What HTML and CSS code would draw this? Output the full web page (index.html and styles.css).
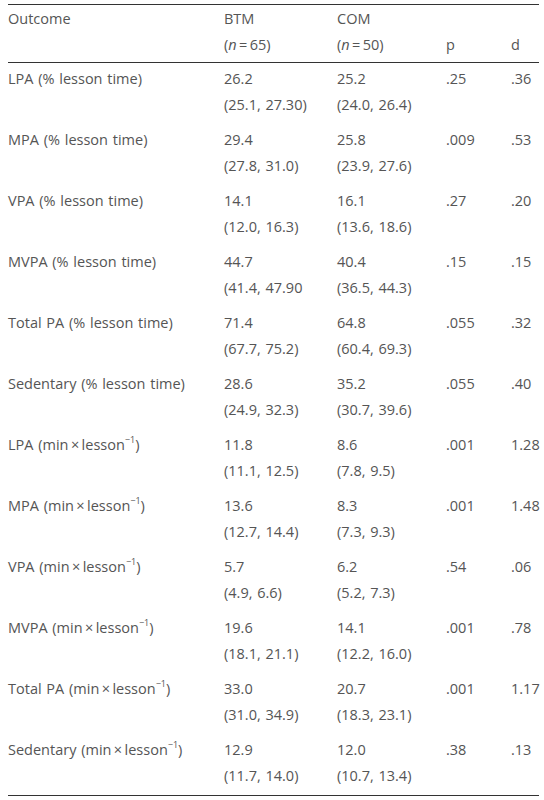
FILE: index.html
```html
<!DOCTYPE html>
<html lang="en">
<head>
    <meta charset="UTF-8">
    <meta name="viewport" content="width=device-width, initial-scale=1.0">
    <title>Physical activity outcomes by model</title>
    <link rel="stylesheet" href="styles.css">
</head>
<body>
    <table class="results">
        <colgroup>
            <col class="col-outcome">
            <col class="col-group">
            <col class="col-group2">
            <col class="col-p">
            <col class="col-d">
        </colgroup>
        <thead>
            <tr>
                <th class="top">Outcome</th>
                <th><span class="line">BTM</span><span class="line">(<i>n</i>&thinsp;=&thinsp;65)</span></th>
                <th><span class="line">COM</span><span class="line">(<i>n</i>&thinsp;=&thinsp;50)</span></th>
                <th>p</th>
                <th>d</th>
            </tr>
        </thead>
        <tbody>
            <tr>
                <td>LPA (% lesson time)</td>
                <td><span class="line">26.2</span><span class="line">(25.1, 27.30)</span></td>
                <td><span class="line">25.2</span><span class="line">(24.0, 26.4)</span></td>
                <td>.25</td>
                <td>.36</td>
            </tr>
            <tr>
                <td>MPA (% lesson time)</td>
                <td><span class="line">29.4</span><span class="line">(27.8, 31.0)</span></td>
                <td><span class="line">25.8</span><span class="line">(23.9, 27.6)</span></td>
                <td>.009</td>
                <td>.53</td>
            </tr>
            <tr>
                <td>VPA (% lesson time)</td>
                <td><span class="line">14.1</span><span class="line">(12.0, 16.3)</span></td>
                <td><span class="line">16.1</span><span class="line">(13.6, 18.6)</span></td>
                <td>.27</td>
                <td>.20</td>
            </tr>
            <tr>
                <td>MVPA (% lesson time)</td>
                <td><span class="line">44.7</span><span class="line">(41.4, 47.90</span></td>
                <td><span class="line">40.4</span><span class="line">(36.5, 44.3)</span></td>
                <td>.15</td>
                <td>.15</td>
            </tr>
            <tr>
                <td>Total PA (% lesson time)</td>
                <td><span class="line">71.4</span><span class="line">(67.7, 75.2)</span></td>
                <td><span class="line">64.8</span><span class="line">(60.4, 69.3)</span></td>
                <td>.055</td>
                <td>.32</td>
            </tr>
            <tr>
                <td>Sedentary (% lesson time)</td>
                <td><span class="line">28.6</span><span class="line">(24.9, 32.3)</span></td>
                <td><span class="line">35.2</span><span class="line">(30.7, 39.6)</span></td>
                <td>.055</td>
                <td>.40</td>
            </tr>
            <tr>
                <td>LPA (min&thinsp;×&thinsp;lesson<sup>−1</sup>)</td>
                <td><span class="line">11.8</span><span class="line">(11.1, 12.5)</span></td>
                <td><span class="line">8.6</span><span class="line">(7.8, 9.5)</span></td>
                <td>.001</td>
                <td>1.28</td>
            </tr>
            <tr>
                <td>MPA (min&thinsp;×&thinsp;lesson<sup>−1</sup>)</td>
                <td><span class="line">13.6</span><span class="line">(12.7, 14.4)</span></td>
                <td><span class="line">8.3</span><span class="line">(7.3, 9.3)</span></td>
                <td>.001</td>
                <td>1.48</td>
            </tr>
            <tr>
                <td>VPA (min&thinsp;×&thinsp;lesson<sup>−1</sup>)</td>
                <td><span class="line">5.7</span><span class="line">(4.9, 6.6)</span></td>
                <td><span class="line">6.2</span><span class="line">(5.2, 7.3)</span></td>
                <td>.54</td>
                <td>.06</td>
            </tr>
            <tr>
                <td>MVPA (min&thinsp;×&thinsp;lesson<sup>−1</sup>)</td>
                <td><span class="line">19.6</span><span class="line">(18.1, 21.1)</span></td>
                <td><span class="line">14.1</span><span class="line">(12.2, 16.0)</span></td>
                <td>.001</td>
                <td>.78</td>
            </tr>
            <tr>
                <td>Total PA (min&thinsp;×&thinsp;lesson<sup>−1</sup>)</td>
                <td><span class="line">33.0</span><span class="line">(31.0, 34.9)</span></td>
                <td><span class="line">20.7</span><span class="line">(18.3, 23.1)</span></td>
                <td>.001</td>
                <td>1.17</td>
            </tr>
            <tr>
                <td>Sedentary (min&thinsp;×&thinsp;lesson<sup>−1</sup>)</td>
                <td><span class="line">12.9</span><span class="line">(11.7, 14.0)</span></td>
                <td><span class="line">12.0</span><span class="line">(10.7, 13.4)</span></td>
                <td>.38</td>
                <td>.13</td>
            </tr>
        </tbody>
    </table>
</body>
</html>
```

FILE: styles.css
```css
body {
    margin: 0;
    padding: 4px 5px 0 8px;
    background: #fff;
    color: #555;
    font-family: "Open Sans", "Noto Sans", sans-serif;
    font-size: 14.5px;
}
.results {
    width: 531px;
    border-collapse: collapse;
    table-layout: fixed;
    border-top: 1px solid #333;
    border-bottom: 1px solid #333;
}
.col-outcome { width: 216px; }
.col-group { width: 113px; }
.col-group2 { width: 109px; }
.col-p { width: 65px; }
.col-d { width: 28px; }
th, td {
    padding: 0;
    text-align: left;
    vertical-align: top;
    line-height: 26px;
    font-weight: normal;
    white-space: nowrap;
    word-spacing: 1px;
}
thead th {
    padding: 1px 0 4px;
    vertical-align: bottom;
    border-bottom: 1px solid #333;
}
thead th.top {
    vertical-align: top;
}
tbody td {
    padding: 3px 0 6px;
}
.line {
    display: block;
}
sup {
    font-size: 9px;
    line-height: 0;
    vertical-align: 7px;
}
```
